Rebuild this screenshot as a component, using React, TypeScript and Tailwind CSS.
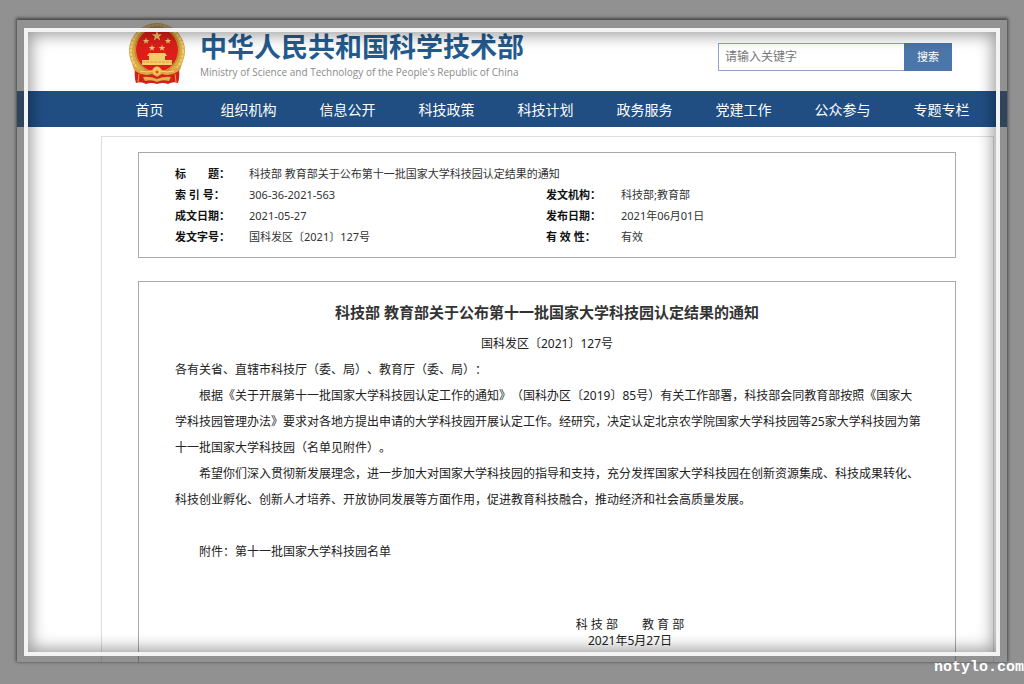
import { Fragment } from 'react';

const navItems = [
  '首页',
  '组织机构',
  '信息公开',
  '科技政策',
  '科技计划',
  '政务服务',
  '党建工作',
  '公众参与',
  '专题专栏',
];

const metaRows = [
  ['索 引 号：', '306-36-2021-563', '发文机构：', '科技部;教育部'],
  ['成文日期：', '2021-05-27', '发布日期：', '2021年06月01日'],
  ['发文字号：', '国科发区〔2021〕127号', '有 效 性：', '有效'],
];

const paragraphs = [
  [
    '根据《关于开展第十一批国家大学科技园认定工作的通知》（国科办区〔2019〕85号）有关工作部署，科技部会同教育部按照《国家大',
    '学科技园管理办法》要求对各地方提出申请的大学科技园开展认定工作。经研究，决定认定北京农学院国家大学科技园等25家大学科技园为第',
    '十一批国家大学科技园（名单见附件）。',
  ],
  [
    '希望你们深入贯彻新发展理念，进一步加大对国家大学科技园的指导和支持，充分发挥国家大学科技园在创新资源集成、科技成果转化、',
    '科技创业孵化、创新人才培养、开放协同发展等方面作用，促进教育科技融合，推动经济和社会高质量发展。',
  ],
];

const STAR = 'M0,-1 L0.23,-0.31 L0.95,-0.31 L0.37,0.12 L0.59,0.81 L0,0.38 L-0.59,0.81 L-0.37,0.12 L-0.95,-0.31 L-0.23,-0.31 Z';

function Emblem() {
  return (
    <svg viewBox="0 0 58 62" className="h-[62px] w-[58px] shrink-0" role="img" aria-label="国徽">
      <ellipse cx="29" cy="28" rx="28" ry="28" fill="#d9a944" />
      <ellipse cx="29" cy="28" rx="26" ry="26" fill="none" stroke="#efce7d" strokeWidth="2" strokeDasharray="3 1" />
      <ellipse cx="29" cy="27" rx="22" ry="23" fill="none" stroke="#b98227" strokeWidth="1" />
      <path d="M7 45 Q6 54 8 60 Q13 58 18 61 Q23 59 29 61 Q35 59 40 61 Q45 58 50 60 Q52 54 51 45 Q40 50 29 47 Q18 50 7 45 Z" fill="#d2201a" />
      <ellipse cx="29" cy="27" rx="21" ry="22" fill="#dd1f1a" />
      <g fill="#f4cd6a">
        <path d={STAR} transform="translate(29 13) scale(5.500)" />
        <path d={STAR} transform="translate(18 18) scale(3.500)" />
        <path d={STAR} transform="translate(40 18) scale(3.500)" />
        <path d={STAR} transform="translate(24 25) scale(3.500)" />
        <path d={STAR} transform="translate(34 25) scale(3.500)" />
        <path d="M21 30 H37 L39 33 H19 Z M21 33 H37 V37 H21 Z M14 37 H44 V42 H14 Z" />
      </g>
      <path d="M14 39 H44" stroke="#dd9a3a" strokeWidth="1" strokeDasharray="3 1" />
      <path d="M4 41 Q14 50 24 47 Q26 44 29 43 Q32 44 34 47 Q44 50 54 41 L52 47 Q43 54 34 51 L29 54 L24 51 Q15 54 6 47 Z" fill="#dba640" />
      <path d="M12 48 Q20 50 25 48 M33 48 Q38 50 46 48" fill="none" stroke="#f4d385" strokeWidth="1" />
      <circle cx="29" cy="48" r="4" fill="#f0c763" />
      <circle cx="29" cy="49" r="1.500" fill="#c9541f" />
      <path d="M15 54 Q22 53 29 56 Q36 53 43 54 L41 58 Q34 56 29 59 Q24 56 17 58 Z" fill="#e5b04b" />
      <path d="M11 51 L10 59 M47 51 L48 59" stroke="#e9a04a" strokeWidth="1" />
    </svg>
  );
}

function Header() {
  return (
    <header className="flex h-[71px] items-start justify-between pl-[111px] pr-[55px] pt-[3px]">
      <div className="flex gap-[14px]">
        <Emblem />
        <div className="pt-[5px]">
          <h1 className="text-[27px] font-bold leading-[38px] text-[#245b8f]">中华人民共和国科学技术部</h1>
          <p className="font-['Open_Sans'] text-[10px] leading-3 text-[#8a8a8a]">
            Ministry of Science and Technology of the People's Republic of China
          </p>
        </div>
      </div>
      <form className="mt-5 flex h-7" onSubmit={(e) => e.preventDefault()}>
        <input
          type="text"
          aria-label="请输入关键字"
          placeholder="请输入关键字"
          className="w-[186px] border border-r-0 border-[#8ea6c4] bg-white px-[6px] text-xs outline-none placeholder:text-[#777]"
        />
        <button type="submit" className="w-12 bg-[#4b76a9] text-[11px] text-white">
          搜索
        </button>
      </form>
    </header>
  );
}

function MetaTable() {
  return (
    <section className="border border-[#aaa] py-[10px] pl-9 pr-4">
      <table className="w-full table-fixed text-left text-[11px] leading-[21px] text-[#333]">
        <colgroup>
          <col className="w-[74px]" />
          <col className="w-[297px]" />
          <col className="w-[75px]" />
          <col />
        </colgroup>
        <tbody>
          <tr>
            <th scope="row" className="whitespace-pre p-0 font-bold text-[#111]">标　　题：</th>
            <td colSpan={3} className="p-0">科技部 教育部关于公布第十一批国家大学科技园认定结果的通知</td>
          </tr>
          {metaRows.map(([label, value, label2, value2]) => (
            <tr key={label}>
              <th scope="row" className="p-0 font-bold text-[#111]">{label}</th>
              <td className="p-0">{value}</td>
              <th scope="row" className="p-0 font-bold text-[#111]">{label2}</th>
              <td className="p-0">{value2}</td>
            </tr>
          ))}
        </tbody>
      </table>
    </section>
  );
}

function Article() {
  return (
    <article className="flex-1 border border-b-0 border-[#aaa] pt-4 text-xs leading-[26px] text-[#222]">
      <h2 className="text-center text-[15px] font-bold leading-7 text-[#333]">
        科技部 教育部关于公布第十一批国家大学科技园认定结果的通知
      </h2>
      <p className="mt-[5px] text-center">国科发区〔2021〕127号</p>
      <div className="pl-9 pr-6">
        <p>各有关省、直辖市科技厅（委、局）、教育厅（委、局）：</p>
        {paragraphs.map((lines) => (
          <p key={lines[0]} className="indent-6">
            {lines.map((line, i) => (
              <Fragment key={line}>
                {i > 0 && <br />}
                {line}
              </Fragment>
            ))}
          </p>
        ))}
        <p className="mt-[26px] indent-6">附件：第十一批国家大学科技园名单</p>
      </div>
      <div className="mt-[52px] pl-[166px] text-center leading-4">
        <p className="whitespace-pre">科 技 部　　教 育 部</p>
        <p>2021年5月27日</p>
      </div>
    </article>
  );
}

export default function App() {
  return (
    <div className="relative flex min-h-screen flex-col bg-[#919191] px-[17px] pb-[22px] pt-5 font-['Noto_Sans','Noto_Sans_CJK_SC',sans-serif] [text-spacing-trim:space-all]">
      <div className="relative flex flex-1 flex-col bg-white shadow-[0_-1px_3px_1px_#444]">
        <Header />
        <nav className="bg-[#204e83]">
          <ul className="grid h-9 grid-cols-9 items-center pl-[83px] pr-4 pt-px text-center text-sm text-white">
            {navItems.map((item) => (
              <li key={item}>
                <a href="#">{item}</a>
              </li>
            ))}
          </ul>
        </nav>
        <main className="ml-[84px] mr-[13px] mt-[9px] flex flex-1 flex-col gap-[23px] border border-b-0 border-[#ddd] pl-9 pr-[37px] pt-[15px]">
          <MetaTable />
          <Article />
        </main>

        {/* picture frame laid over the page */}
        <div className="pointer-events-none absolute inset-0 border-x-[7px] border-b-[6px] border-t-8 border-[#3c3c3c]/56">
          <div className="h-full border-4 border-[#f3f3f3] shadow-[inset_0_0_16px_3px_rgba(0,0,0,0.4)]" />
        </div>
      </div>
      <span className="absolute bottom-1 right-0 font-['Liberation_Mono',monospace] text-[15px] font-bold leading-6 text-white">
        notylo.com
      </span>
    </div>
  );
}
